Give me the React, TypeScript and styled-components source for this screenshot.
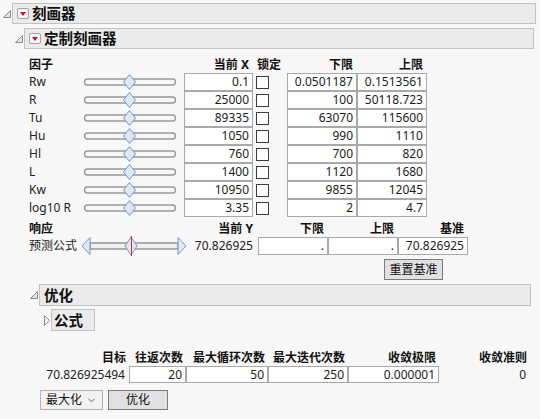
import React from "react";
import styled, { createGlobalStyle } from "styled-components";

const GlobalStyle = createGlobalStyle`
  html, body {
    margin: 0;
    padding: 0;
    background: #f7f7f7;
  }
  body {
    font-family: "Noto Sans", "Noto Sans CJK SC", sans-serif;
    font-size: 12px;
    color: #1c1c1c;
  }
`;

const Page = styled.div`
  width: 540px;
  padding-top: 3px;
`;

const OutlineHead = styled.div<{ $indent: number; $right?: number; $top?: number }>`
  display: flex;
  align-items: center;
  margin-left: ${(p) => p.$indent}px;
  margin-right: ${(p) => p.$right ?? 0}px;
  margin-top: ${(p) => p.$top ?? 0}px;
`;

const Disclosure = styled.span<{ $w: number }>`
  width: ${(p) => p.$w}px;
  flex: 0 0 auto;
  display: flex;
  align-items: center;
`;

const Bar = styled.div<{ $fit?: boolean; $h?: number }>`
  flex: ${(p) => (p.$fit ? "0 0 auto" : "1")};
  box-sizing: border-box;
  height: ${(p) => p.$h ?? 21}px;
  border: 1px solid #c2c2c2;
  background: #ebebeb;
  display: flex;
  align-items: center;
  gap: 3px;
  padding: ${(p) => (p.$fit ? "0 11px 0 2px" : "0 0 0 4px")};
  font-weight: bold;
  font-size: 14.5px;
  color: #111;
  line-height: 1;
`;

const MenuBtn = styled.span`
  box-sizing: border-box;
  width: 12px;
  height: 11px;
  border: 1px solid #a3a3a3;
  border-radius: 2px;
  background: #f6f6f6;
  display: flex;
  align-items: center;
  justify-content: center;
  &::after {
    content: "";
    border-left: 3.5px solid transparent;
    border-right: 3.5px solid transparent;
    border-top: 4px solid #d3121b;
  }
`;

const Section = styled.div<{ $top?: number }>`
  margin-top: ${(p) => p.$top ?? 0}px;
`;

const Grid = styled.div<{ $cols: string; $left: number; $top?: number }>`
  display: grid;
  grid-template-columns: ${(p) => p.$cols};
  margin-left: ${(p) => p.$left}px;
  margin-top: ${(p) => p.$top ?? 0}px;
`;

const Cell = styled.div<{ $align?: "left" | "right"; $bold?: boolean; $h?: number; $pad?: number }>`
  height: ${(p) => p.$h ?? 18}px;
  display: flex;
  align-items: center;
  justify-content: ${(p) => (p.$align === "right" ? "flex-end" : "flex-start")};
  padding-right: ${(p) => p.$pad ?? 0}px;
  font-weight: ${(p) => (p.$bold ? "bold" : "normal")};
  white-space: nowrap;
  line-height: 1;
  color: ${(p) => (p.$bold ? "#111" : "#222")};
`;

const NumBox = styled.div<{ $h?: number }>`
  box-sizing: border-box;
  height: ${(p) => p.$h ?? 18}px;
  border: 1px solid #a9a9a9;
  background: #fff;
  display: flex;
  align-items: center;
  justify-content: flex-end;
  padding-right: 3px;
  line-height: 1;
  white-space: nowrap;
  color: #1c1c1c;
`;

const LockCell = styled.div`
  height: 18px;
  display: flex;
  align-items: center;
  padding-left: 3px;
`;

const CheckBox = styled.span`
  box-sizing: border-box;
  width: 13px;
  height: 13px;
  border: 1px solid #3c3c3c;
  background: #fff;
`;

const SliderCell = styled.div`
  height: 18px;
  display: flex;
  align-items: center;
`;

const ButtonRow = styled.div<{ $left: number; $top: number }>`
  display: flex;
  align-items: center;
  gap: 5px;
  margin-left: ${(p) => p.$left}px;
  margin-top: ${(p) => p.$top}px;
`;

const Button = styled.button<{ $w: number; $h: number }>`
  box-sizing: border-box;
  width: ${(p) => p.$w}px;
  height: ${(p) => p.$h}px;
  border: 1px solid #7a7a7a;
  background: #e1e1e1;
  font-family: inherit;
  font-size: 12px;
  color: #111;
  padding: 0;
  line-height: 1;
`;

const Select = styled.div`
  box-sizing: border-box;
  width: 63px;
  height: 20px;
  border: 1px solid #b4b4b4;
  background: #f2f2f2;
  display: flex;
  align-items: center;
  justify-content: space-between;
  padding: 0 7px 0 5px;
  font-size: 12px;
  line-height: 1;
  color: #111;
`;

const OpenTri = () => (
  <svg width="8" height="8" viewBox="0 0 8 8">
    <polygon points="7.5,0.5 7.5,7.5 0.5,7.5" fill="#e3e3e3" stroke="#8a8a8a" strokeWidth="1" />
  </svg>
);

const ClosedTri = () => (
  <svg width="6" height="11" viewBox="0 0 6 11">
    <polygon points="0.5,0.5 5.5,5.5 0.5,10.5" fill="#f2f2f2" stroke="#8a8a8a" strokeWidth="1" />
  </svg>
);

const Chevron = () => (
  <svg width="7" height="5" viewBox="0 0 7 5">
    <polyline points="0.5,0.8 3.5,3.8 6.5,0.8" fill="none" stroke="#666" strokeWidth="1" />
  </svg>
);

const FactorSlider = () => (
  <svg width="104" height="18" viewBox="0 0 104 18">
    <rect x="4.5" y="6" width="91" height="6" rx="3" fill="#f6f6f6" stroke="#999" strokeWidth="1.4" />
    <polygon points="49.5,1.5 55.5,9 49.5,16.5 43.5,9" fill="#dce8f6" stroke="#7c98bf" strokeWidth="1" />
  </svg>
);

const ResponseSlider = () => (
  <svg width="106" height="20" viewBox="0 0 106 20">
    <rect x="9" y="7" width="88" height="6" fill="#f0f0f0" stroke="#9b9b9b" strokeWidth="1.6" />
    <polygon points="1,10 9,1.5 9,18.5" fill="#dce8f6" stroke="#7c98bf" strokeWidth="1" />
    <polygon points="97,1.5 105,10 97,18.5" fill="#dce8f6" stroke="#7c98bf" strokeWidth="1" />
    <polygon points="50,1 56,10 50,19 44,10" fill="#dce8f6" stroke="#7c98bf" strokeWidth="1" />
    <rect x="50" y="0" width="1" height="20" fill="#e8222c" />
  </svg>
);

const factors = [
  { name: "Rw", x: "0.1", lo: "0.0501187", hi: "0.1513561" },
  { name: "R", x: "25000", lo: "100", hi: "50118.723" },
  { name: "Tu", x: "89335", lo: "63070", hi: "115600" },
  { name: "Hu", x: "1050", lo: "990", hi: "1110" },
  { name: "Hl", x: "760", lo: "700", hi: "820" },
  { name: "L", x: "1400", lo: "1120", hi: "1680" },
  { name: "Kw", x: "10950", lo: "9855", hi: "12045" },
  { name: "log10 R", x: "3.35", lo: "2", hi: "4.7" },
];

const optHeads = ["目标", "往返次数", "最大循环次数", "最大迭代次数", "收敛极限", "收敛准则"];

export default function App() {
  return (
    <Page>
      <GlobalStyle />
      <OutlineHead $indent={3} $right={4}>
        <Disclosure $w={9}>
          <OpenTri />
        </Disclosure>
        <Bar>
          <MenuBtn />
          刻画器
        </Bar>
      </OutlineHead>

      <OutlineHead $indent={15} $right={6} $top={4}>
        <Disclosure $w={9}>
          <OpenTri />
        </Disclosure>
        <Bar>
          <MenuBtn />
          定制刻画器
        </Bar>
      </OutlineHead>

      <Section $top={7}>
        <Grid $cols="51px 104px 69px 34px 70px 70px" $left={29}>
          <Cell $bold $h={17}>因子</Cell>
          <Cell $h={17} />
          <Cell $bold $h={17} $align="right" $pad={4}>当前 X</Cell>
          <Cell $bold $h={17} $pad={0}>
            <span style={{ marginLeft: 4 }}>锁定</span>
          </Cell>
          <Cell $bold $h={17} $align="right" $pad={4}>下限</Cell>
          <Cell $bold $h={17} $align="right" $pad={4}>上限</Cell>
          {factors.map((f) => (
            <React.Fragment key={f.name}>
              <Cell>{f.name}</Cell>
              <SliderCell>
                <FactorSlider />
              </SliderCell>
              <NumBox>{f.x}</NumBox>
              <LockCell>
                <CheckBox />
              </LockCell>
              <NumBox>{f.lo}</NumBox>
              <NumBox>{f.hi}</NumBox>
            </React.Fragment>
          ))}
        </Grid>

        <Grid $cols="52px 106px 71px 70px 70px 70px" $left={29} $top={3}>
          <Cell $bold $h={17}>响应</Cell>
          <Cell $h={17} />
          <Cell $bold $h={17} $align="right" $pad={5}>当前 Y</Cell>
          <Cell $bold $h={17} $align="right" $pad={4}>下限</Cell>
          <Cell $bold $h={17} $align="right" $pad={4}>上限</Cell>
          <Cell $bold $h={17} $align="right" $pad={4}>基准</Cell>
          <Cell>预测公式</Cell>
          <SliderCell>
            <ResponseSlider />
          </SliderCell>
          <Cell $align="right" $pad={5}>70.826925</Cell>
          <NumBox>.</NumBox>
          <NumBox>.</NumBox>
          <NumBox>70.826925</NumBox>
        </Grid>

        <ButtonRow $left={384} $top={4}>
          <Button $w={59} $h={21}>重置基准</Button>
        </ButtonRow>

        <OutlineHead $indent={30} $right={9} $top={4}>
          <Disclosure $w={9}>
            <OpenTri />
          </Disclosure>
          <Bar $h={22}>优化</Bar>
        </OutlineHead>

        <OutlineHead $indent={44} $top={3}>
          <Disclosure $w={7}>
            <ClosedTri />
          </Disclosure>
          <Bar $fit $h={22}>公式</Bar>
        </OutlineHead>

        <Grid $cols="84px 57px 82px 80px 91px 91px" $left={45} $top={19}>
          {optHeads.map((h) => (
            <Cell key={h} $bold $h={16} $align="right" $pad={3}>
              {h}
            </Cell>
          ))}
          <Cell $h={17} $align="right" $pad={4}>70.826925494</Cell>
          <NumBox $h={17}>20</NumBox>
          <NumBox $h={17}>50</NumBox>
          <NumBox $h={17}>250</NumBox>
          <NumBox $h={17}>0.000001</NumBox>
          <Cell $h={17} $align="right" $pad={4}>0</Cell>
        </Grid>

        <ButtonRow $left={40} $top={7}>
          <Select>
            最大化
            <Chevron />
          </Select>
          <Button $w={60} $h={20}>优化</Button>
        </ButtonRow>
      </Section>
    </Page>
  );
}
